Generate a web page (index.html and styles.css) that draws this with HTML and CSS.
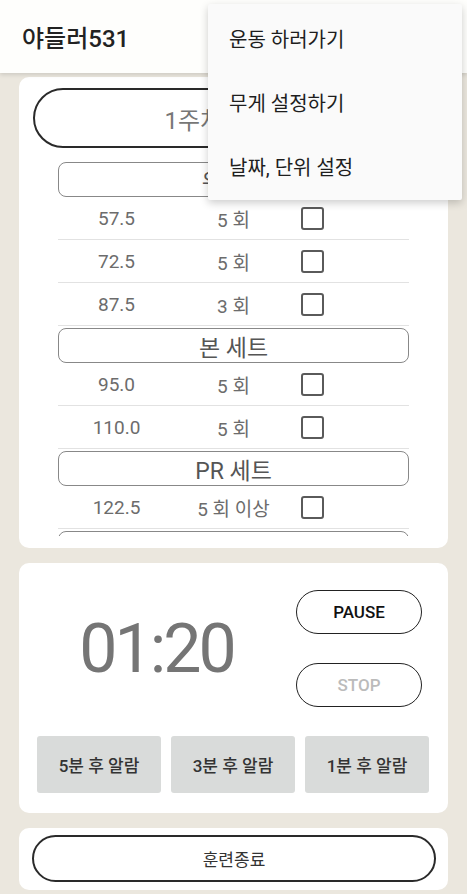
FILE: index.html
```html
<!DOCTYPE html>
<html lang="ko">
<head>
  <meta charset="UTF-8" />
  <meta name="viewport" content="width=device-width, initial-scale=1" />
  <title>야들러531</title>
  <link rel="stylesheet" href="styles.css">
</head>
<body>

  <header class="app-bar">
    <h1 class="app-title">야들러531</h1>
  </header>

  <ul class="menu">
    <li>운동 하러가기</li>
    <li>무게 설정하기</li>
    <li>날짜, 단위 설정</li>
  </ul>

  <main class="content">
    <section class="card plan-card">
      <button class="pill-btn week-btn">1주차 (1일차)</button>

      <div class="set-list">
        <div class="set-header">워밍업</div>
        <div class="set-row"><span>57.5</span><span>5 회</span><span class="check"></span></div>
        <div class="set-row"><span>72.5</span><span>5 회</span><span class="check"></span></div>
        <div class="set-row"><span>87.5</span><span>3 회</span><span class="check"></span></div>

        <div class="set-header">본 세트</div>
        <div class="set-row"><span>95.0</span><span>5 회</span><span class="check"></span></div>
        <div class="set-row"><span>110.0</span><span>5 회</span><span class="check"></span></div>

        <div class="set-header">PR 세트</div>
        <div class="set-row"><span>122.5</span><span>5 회 이상</span><span class="check"></span></div>

        <div class="set-header"></div>
      </div>
    </section>

    <section class="card timer-card">
      <div class="timer-top">
        <div class="timer">01:20</div>
        <div class="timer-controls">
          <button class="ctrl-btn">PAUSE</button>
          <button class="ctrl-btn disabled">STOP</button>
        </div>
      </div>
      <div class="alarm-row">
        <button class="alarm-btn">5분 후 알람</button>
        <button class="alarm-btn">3분 후 알람</button>
        <button class="alarm-btn">1분 후 알람</button>
      </div>
    </section>

    <section class="card finish-card">
      <button class="pill-btn finish-btn">훈련종료</button>
    </section>
  </main>

</body>
</html>
```

FILE: styles.css
```css
body {
  margin: 0;
  font-family: Roboto, "Noto Sans CJK KR", sans-serif;
  background: #ebe7de;
  color: #222;
}
button {
  font-family: Roboto, "Noto Sans CJK KR", sans-serif;
  cursor: pointer;
}

.app-bar {
  height: 73px;
  background: #fefefc;
  box-shadow: 0 2px 4px rgba(0,0,0,0.12);
  display: flex;
  align-items: center;
  padding-left: 22px;
  position: relative;
  z-index: 2;
}
.app-title {
  margin: 0;
  font-size: 24px;
  font-weight: 500;
  color: #222;
}

/* overflow menu, open over the page */
.menu {
  position: absolute;
  top: 4px;
  left: 208px;
  width: 254px;
  margin: 0;
  padding: 2px 0;
  list-style: none;
  background: #fafafa;
  box-shadow: 0 3px 8px rgba(0,0,0,0.2);
  border-radius: 2px;
  z-index: 5;
}
.menu li {
  height: 64px;
  display: flex;
  align-items: center;
  padding-left: 21px;
  font-size: 20px;
  color: #1e1e1e;
}

.content {
  padding: 4px 19px 0;
  display: flex;
  flex-direction: column;
  gap: 15px;
}
.card {
  background: #fff;
  border-radius: 10px;
  box-sizing: border-box;
}

.pill-btn {
  display: block;
  width: 100%;
  background: #fff;
  border: 2px solid #2a2a2a;
  border-radius: 30px;
}

/* workout plan */
.plan-card {
  height: 471px;
  padding: 11px 14px 12px;
  display: flex;
  flex-direction: column;
}
.week-btn {
  height: 60px;
  flex-shrink: 0;
  font-size: 24px;
  color: #777;
}
.set-list {
  flex: 1;
  overflow: hidden;
  margin: 14px 25px 0;
}
.set-header {
  height: 35px;
  box-sizing: border-box;
  border: 1.5px solid #888;
  border-radius: 8px;
  margin-top: 2px;
  display: flex;
  align-items: center;
  justify-content: center;
  font-size: 23px;
  color: #555;
}
.set-header:first-child {
  margin-top: 0;
}
.set-row {
  height: 43px;
  box-sizing: border-box;
  border-bottom: 1px solid #e2e2e2;
  display: grid;
  grid-template-columns: 1fr 1fr 1fr;
  align-items: center;
  font-size: 19px;
  color: #6c6c6c;
  text-align: center;
}
.check {
  width: 19px;
  height: 19px;
  border: 2px solid #5a5a5a;
  border-radius: 3px;
  margin-left: 9px;
}

/* rest timer */
.timer-card {
  padding: 27px 19px 20px 18px;
}
.timer-top {
  display: flex;
  align-items: center;
}
.timer {
  flex: 1;
  text-align: center;
  font-size: 68px;
  letter-spacing: -3px;
  color: #757575;
  padding-right: 20px;
}
.timer-controls {
  display: flex;
  flex-direction: column;
  gap: 29px;
  margin-right: 7px;
}
.ctrl-btn {
  width: 126px;
  height: 44px;
  background: #fff;
  border: 1.5px solid #222;
  border-radius: 22px;
  font-size: 17px;
  font-weight: 500;
  color: #111;
}
.ctrl-btn.disabled {
  color: #bbb;
}
.alarm-row {
  display: flex;
  gap: 10px;
  margin-top: 29px;
}
.alarm-btn {
  flex: 1;
  height: 57px;
  border: none;
  border-radius: 3px;
  background: #d9dbda;
  font-size: 17px;
  font-weight: 500;
  color: #333;
}

/* finish */
.finish-card {
  padding: 7px 12px 8px 13px;
}
.finish-btn {
  height: 47px;
  font-size: 17px;
  color: #333;
}
```
